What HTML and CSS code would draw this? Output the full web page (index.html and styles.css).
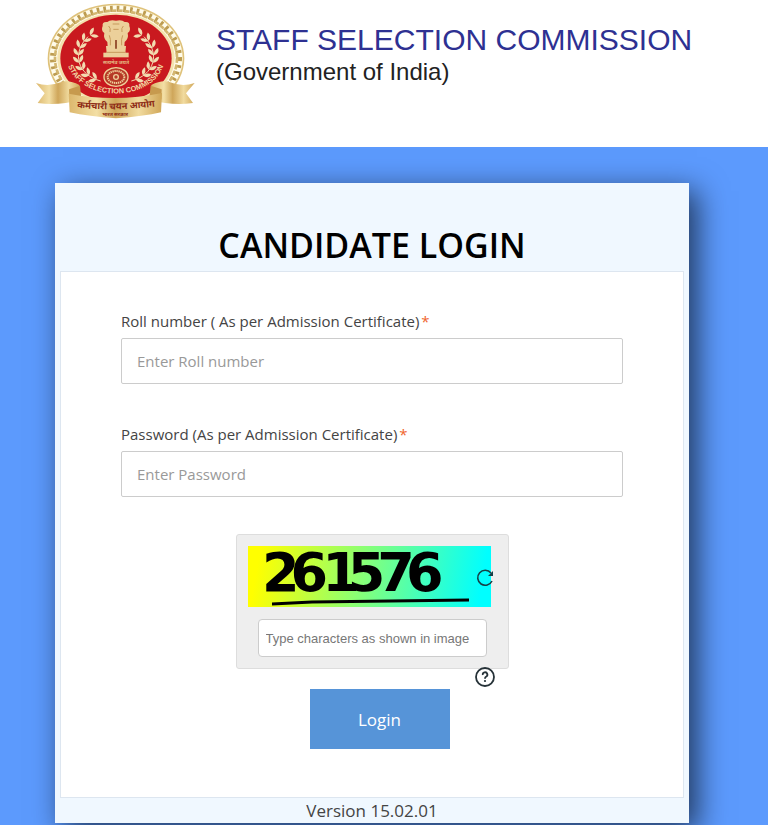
FILE: index.html
```html
<!DOCTYPE html>
<html lang="en">
<head>
  <meta charset="UTF-8">
  <meta name="viewport" content="width=device-width, initial-scale=1">
  <title>Candidate Login</title>
  <link rel="stylesheet" href="styles.css">
</head>
<body>
  <!-- Header -->
  <header class="site-header">
    <svg class="logo" viewBox="0 0 510 375" role="img" aria-label="Staff Selection Commission">
      <defs>
        <linearGradient id="gold" x1="0" y1="0" x2="1" y2="0">
          <stop offset="0" stop-color="#dcb76c"/>
          <stop offset="0.3" stop-color="#f3dfa5"/>
          <stop offset="0.5" stop-color="#cfa65a"/>
          <stop offset="0.75" stop-color="#f1db9f"/>
          <stop offset="1" stop-color="#d0a657"/>
        </linearGradient>
        <path id="motto" d="M107 168 C122 318 394 318 407 168"/>
        <path id="hindi" d="M130 322 Q258 336 386 318"/>
        <g id="leaves">
          <path d="M0 4 Q-18 0 -15 -17 Q-1 -12 0 4Z"/>
          <path d="M0 4 Q18 0 15 -17 Q1 -12 0 4Z"/>
        </g>
        <g id="laurel" fill="#f2dcb0">
          <use href="#leaves" transform="translate(184 104) rotate(60)"/>
          <use href="#leaves" transform="translate(163 120) rotate(40)"/>
          <use href="#leaves" transform="translate(150 140) rotate(22)"/>
          <use href="#leaves" transform="translate(145 162) rotate(5)"/>
          <use href="#leaves" transform="translate(147 184) rotate(-12)"/>
          <use href="#leaves" transform="translate(157 206) rotate(-30)"/>
          <use href="#leaves" transform="translate(174 224) rotate(-48)"/>
          <use href="#leaves" transform="translate(196 237) rotate(-64)"/>
          <path d="M174 110 C123 160 143 225 212 243" fill="none" stroke="#f2dcb0" stroke-width="3"/>
        </g>
      </defs>
      <!-- rope border -->
      <ellipse cx="258" cy="175" rx="205" ry="164" fill="#dfc27a"/>
      <ellipse cx="258" cy="175" rx="200" ry="159" fill="#fffbe9"/>
      <ellipse cx="258" cy="175" rx="189" ry="149" fill="none" stroke="#bd9c50" stroke-width="18" stroke-dasharray="8 12"/>
      <ellipse cx="258" cy="175" rx="183" ry="143" fill="none" stroke="#d3b670" stroke-width="8" stroke-dasharray="14 5.4"/>
      <ellipse cx="258" cy="175" rx="176" ry="137" fill="#f4e3ae"/>
      <ellipse cx="258" cy="175" rx="167" ry="131" fill="#c9191f"/>
      <!-- laurel -->
      <use href="#laurel"/>
      <use href="#laurel" transform="matrix(-1 0 0 1 516 0)"/>
      <!-- lion capital -->
      <g fill="#ecd09a">
        <path d="M218 78 Q216 64 232 66 Q240 58 258 62 Q276 58 284 66 Q300 64 298 78 Q304 92 293 99 Q297 116 284 126 L283 140 H233 L232 126 Q219 116 223 99 Q212 92 218 78Z"/>
        <path d="M228 138 H288 L286 160 H230Z"/>
        <path d="M220 158 H296 V172 H220Z"/>
      </g>
      <g fill="none" stroke="#c79a5c" stroke-width="3">
        <path d="M236 78 Q243 84 240 96 M280 78 Q273 84 276 96 M248 72 H268 M250 88 H266 M238 106 Q243 116 241 136 M278 106 Q273 116 275 136"/>
        <path d="M230 157 H286"/>
        <path d="M258 120 V146" stroke="#8a3f22" stroke-width="5"/>
      </g>
      <text class="logo-small" x="258" y="193" text-anchor="middle">सत्यमेव जयते</text>
      <!-- wheel -->
      <ellipse cx="258" cy="231" rx="38" ry="30" fill="#b63a26"/>
      <g fill="none" stroke="#efd09b">
        <ellipse cx="258" cy="231" rx="36" ry="28" stroke-width="4"/>
        <ellipse cx="258" cy="231" rx="25" ry="18" stroke-width="6" stroke-dasharray="4 2"/>
        <circle cx="258" cy="231" r="7" stroke-width="4"/>
      </g>
      <text class="logo-motto"><textPath href="#motto" startOffset="50%" text-anchor="middle">STAFF SELECTION COMMISSION</textPath></text>
      <!-- ribbon -->
      <path d="M18 249 Q55 262 92 247 Q115 238 148 255 L150 300 Q85 318 23 309 L44 280Z" fill="url(#gold)"/>
      <path d="M494 249 Q457 262 420 247 Q397 238 364 255 L362 300 Q427 318 489 309 L468 280Z" fill="url(#gold)"/>
      <path d="M150 257 L117 268 L118 298 L154 294Z M362 257 L395 268 L394 298 L358 294Z" fill="#c79a4e"/>
      <path d="M116 281 Q258 308 396 279 L393 337 Q340 349 258 355 Q176 349 119 337Z" fill="url(#gold)"/>
      <text class="logo-hindi"><textPath href="#hindi" startOffset="50%" text-anchor="middle">कर्मचारी चयन आयोग</textPath></text>
      <text class="logo-small logo-small-red" x="255" y="348" text-anchor="middle">भारत सरकार</text>
    </svg>
    <div class="header-text">
      <div class="org-name">STAFF SELECTION COMMISSION</div>
      <div class="org-sub">(Government of India)</div>
    </div>
  </header>

  <!-- Login -->
  <main class="login-card">
    <h1 class="login-title">CANDIDATE LOGIN</h1>
    <form class="login-panel">
      <div class="field">
        <label for="roll">Roll number ( As per Admission Certificate)<span class="required">*</span></label>
        <input type="text" id="roll" placeholder="Enter Roll number">
      </div>
      <div class="field">
        <label for="password">Password (As per Admission Certificate)<span class="required">*</span></label>
        <input type="password" id="password" placeholder="Enter Password">
      </div>

      <div class="captcha">
        <div class="captcha-image">
          <svg class="captcha-code" viewBox="0 0 243 61" role="img" aria-label="Captcha">
            <text class="captcha-digits" x="14" y="45" dx="0 -9 -6 -12 -8 -9">261576</text>
            <path d="M24 58 L64 56 L221 54" fill="none" stroke="#000" stroke-width="3"/>
          </svg>
          <button type="button" class="icon-button refresh" aria-label="Refresh captcha">
            <svg viewBox="0 0 20 20" width="20" height="20">
              <path d="M16 5 A7.5 7.5 0 1 0 17 13" fill="none" stroke="#173f45" stroke-width="1.6"/>
              <path d="M18 3 V8 H13Z" fill="#173f45"/>
            </svg>
          </button>
        </div>
        <input type="text" class="captcha-input" aria-label="Captcha characters" placeholder="Type characters as shown in image">
        <button type="button" class="icon-button help" aria-label="Captcha help">
          <svg viewBox="0 0 20 20" width="20" height="20">
            <circle cx="10" cy="10" r="9" fill="#fff" stroke="#263238" stroke-width="1.8"/>
            <path d="M7.8 8 A2.3 2.3 0 1 1 11 9.700 Q10 10.200 10 11.800" fill="none" stroke="#263238" stroke-width="1.8"/>
            <circle cx="10" cy="14" r="1.100" fill="#263238"/>
          </svg>
        </button>
      </div>

      <button type="submit" class="login-button">Login</button>
    </form>
    <footer class="version">Version 15.02.01</footer>
  </main>
</body>
</html>
```
FILE: styles.css
```css
* {
  margin: 0;
  padding: 0;
  box-sizing: border-box;
}

body {
  min-height: 100vh;
  font-family: "Open Sans", sans-serif;
  color: #444;
  background: #5c9afd;
  display: flow-root;
}

/* === HEADER === */
.site-header {
  display: flex;
  gap: 16px;
  padding: 0 30px 22px;
  background: #fff;
}

.logo {
  width: 170px;
  height: 125px;
  flex: none;
}

.logo-motto {
  font: bold 22px "Liberation Sans", sans-serif;
  fill: #f3d9a5;
}

.logo-hindi {
  font: bold 28px "Noto Sans", sans-serif;
  fill: #8d2b16;
}

.logo-small {
  font: bold 15px "Noto Sans", sans-serif;
  fill: #e5b983;
}

.logo-small-red {
  fill: #8d2b16;
}

.header-text {
  padding-top: 24px;
  font-family: "Liberation Sans", sans-serif;
}

.org-name {
  font-size: 30px;
  line-height: 32px;
  color: #2e3192;
}

.org-sub {
  font-size: 24px;
  line-height: 32px;
  color: #222;
}

/* === CARD === */
.login-card {
  margin: 36px 79px 2px 55px;
  padding: 36px 5px 0;
  background: aliceblue;
  box-shadow: 8px 8px 28px rgba(0, 0, 0, 0.65);
}

.login-title {
  font-size: 34px;
  font-weight: 600;
  line-height: 52px;
  text-align: center;
  color: #000;
}

.login-panel {
  display: flex;
  flex-direction: column;
  padding: 36px 60px 48px;
  background: #fff;
  border: 1px solid #dde6f0;
}

.field {
  display: flex;
  flex-direction: column;
  gap: 4px;
  margin-bottom: 37px;
}

.field label {
  font-size: 15px;
  line-height: 26px;
}

.required {
  margin-left: 2px;
  color: #f0642d;
}

.field input {
  width: 100%;
  height: 46px;
  padding: 0 15px;
  font: 15px "Open Sans", sans-serif;
  border: 1px solid #ccc;
  border-radius: 2px;
}

.field input::placeholder {
  color: #999;
}

/* === CAPTCHA === */
.captcha {
  position: relative;
  align-self: center;
  width: 273px;
  padding: 11px;
  background: #eee;
  border: 1px solid #ddd;
  border-radius: 3px;
}

.captcha-image {
  position: relative;
  width: 243px;
  height: 61px;
  background: linear-gradient(100deg, #ff0 5%, #7fff7f 50%, #0ff 95%);
}

.captcha-code {
  display: block;
  width: 100%;
  overflow: visible;
}

.captcha-digits {
  font: bold 54px "DejaVu Sans", sans-serif;
}

.captcha-input {
  display: block;
  width: 229px;
  height: 38px;
  margin: 12px 0 0 10px;
  padding: 0 7px;
  font: 13px "Liberation Sans", sans-serif;
  border: 1px solid #ccc;
  border-radius: 4px;
}

.captcha-input::placeholder {
  color: #777;
}

.icon-button {
  position: absolute;
  width: 20px;
  height: 20px;
  background: none;
  border: none;
  cursor: pointer;
}

.refresh {
  right: -4px;
  top: 22px;
}

.help {
  right: 13px;
  bottom: -19px;
}

/* === LOGIN BUTTON === */
.login-button {
  align-self: center;
  width: 140px;
  height: 60px;
  margin: 20px 0 0 15px;
  font: 17px "Open Sans", sans-serif;
  color: #fff;
  background: #5694d8;
  border: none;
  cursor: pointer;
}

.version {
  font-size: 17px;
  line-height: 25px;
  text-align: center;
}

/* === RESPONSIVE === */
@media (max-width: 600px) {
  .site-header {
    flex-wrap: wrap;
  }

  .login-card {
    margin: 20px 12px;
  }

  .login-panel {
    padding: 24px 12px;
  }
}
```
